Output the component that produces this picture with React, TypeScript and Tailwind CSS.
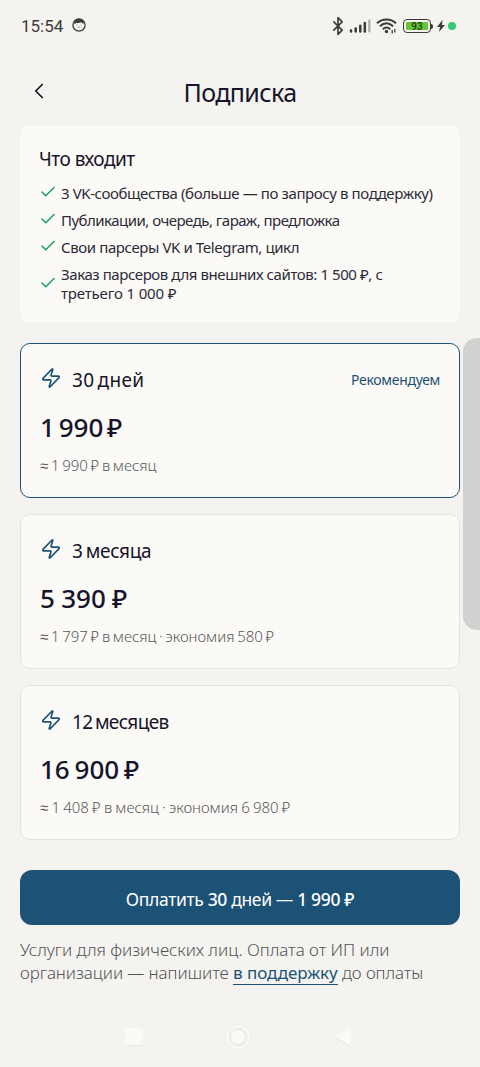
import { Zap, Check, ChevronLeft, Bluetooth } from "lucide-react";

const features = [
    { text: "3 VK-сообщества (больше — по запросу в поддержку)", style: "tracking-[-0.4px]" },
    { text: "Публикации, очередь, гараж, предложка", style: "tracking-[-0.52px]" },
    { text: "Свои парсеры VK и Telegram, цикл", style: "tracking-[-0.4px]" },
    { text: "Заказ парсеров для внешних сайтов: 1 500 ₽, с", more: "третьего 1 000 ₽", style: "tracking-[-0.42px]" },
];

const plans = [
    {
        name: "30 дней",
        nameStyle: "tracking-[0.3px] [word-spacing:-2px]",
        price: "1 990 ₽",
        priceStyle: "[word-spacing:-3px]",
        note: "≈ 1 990 ₽ в месяц",
        noteStyle: "[word-spacing:-1.2px]",
        recommended: true,
    },
    {
        name: "3 месяца",
        nameStyle: "tracking-[-0.3px] [word-spacing:-1.5px]",
        price: "5 390 ₽",
        priceStyle: "[word-spacing:-0.5px]",
        note: "≈ 1 797 ₽ в месяц · экономия 580 ₽",
        noteStyle: "[word-spacing:-1.2px]",
        recommended: false,
    },
    {
        name: "12 месяцев",
        nameStyle: "tracking-[-0.6px] [word-spacing:-2px]",
        price: "16 900 ₽",
        priceStyle: "[word-spacing:-2px]",
        note: "≈ 1 408 ₽ в месяц · экономия 6 980 ₽",
        noteStyle: "[word-spacing:-0.7px]",
        recommended: false,
    },
];

function StatusBar() {
    return (
        <div className="flex h-[52px] items-center pl-[21px] pr-6 text-[#3b3b38]">
            <span className="font-['Roboto'] text-[17px] leading-5">15:54</span>
            <svg className="-mt-[2px] ml-[9px]" width="14" height="14" viewBox="0 0 14 14">
                <circle cx="7" cy="7" r="6.1" fill="none" stroke="currentColor" strokeWidth="1.3" />
                <path d="M2.200 5.800C2.200 2 5 .8 7 .8s4.800 1.200 4.800 5C10.500 5.600 9.800 5 9.500 4.300 7.500 5.200 5.500 5.200 4.300 4.700 4 5.400 3.500 5.800 2.200 5.800Z" fill="currentColor" />
                <path d="M4.800 6.500v.8M9.200 6.500v.8M6 9.300h2" stroke="currentColor" strokeWidth=".5" />
            </svg>
            <div className="ml-auto flex items-center">
                <Bluetooth className="-mt-px h-5 w-5" strokeWidth={2} />
                <svg className="ml-px" width="22" height="14" viewBox="0 0 22 14">
                    <path d="M2 11.500v1M6.700 9.500V12.500M11.300 6.800V12.500M15.800 4V12.500" stroke="currentColor" strokeWidth="2.500" strokeLinecap="round" />
                    <path d="M20.300 1.500V12.500" stroke="#a9aba6" strokeWidth="2.200" strokeLinecap="round" />
                </svg>
                <svg className="ml-[5px]" width="21" height="16" viewBox="0 0 21 16" fill="none" stroke="currentColor" strokeWidth="2">
                    <path d="M1 5.200C6.500.2 14.500.2 20 5.200" />
                    <path d="M3.900 8.300C8 4.600 13 4.600 17.100 8.300" />
                    <path d="M6.800 11.200C9.300 9 11.700 9 14.200 11.200" />
                    <circle cx="10.500" cy="13.500" r="1.700" fill="currentColor" stroke="none" />
                    <path d="M16.200 15.500v-3.500M18.800 11v3.500" strokeWidth="1.300" />
                </svg>
                <div className="ml-[6px] flex h-[14px] w-7 rounded-[4px] border border-[#3b3b38] p-[2px]">
                    <div className="flex w-full items-center justify-center rounded-[1px] bg-[#66c735] pt-px font-['Roboto'] text-[10px] leading-none font-medium text-[#24351d]">93</div>
                </div>
                <div className="h-[5px] w-[2px] rounded-r-sm bg-[#3b3b38]" />
                <svg className="ml-[4px]" width="8" height="12" viewBox="0 0 8 12">
                    <path d="M5.500 0 0 7h3L2 12l6-7H5Z" fill="currentColor" />
                </svg>
                <div className="-mt-px ml-[3px] h-2 w-2 rounded-full bg-[#35cc74]" />
            </div>
        </div>
    );
}

function PlanCard({ plan }: { plan: (typeof plans)[number] }) {
    return (
        <div className={plan.recommended ? "h-[155px] rounded-[10px] border border-[#1b5276] bg-[#fbfaf6] px-[19px] pt-[19px]" : "h-[155px] rounded-[10px] border border-[#e3e3df] bg-[#fbfaf6] px-[19px] pt-[19px]"}>
            <div className="flex h-8 items-center">
                <Zap className="-mt-[3px] h-[22px] w-[22px] text-[#1b5276]" strokeWidth={1.8} />
                <span className="ml-[10px] pt-[3px] text-[19px] text-[#17142b]">
                    <span className={plan.nameStyle}>{plan.name}</span>
                </span>
                {plan.recommended && <span className="ml-auto text-[14px] tracking-[-0.3px] text-[#1b5276]">Рекомендуем</span>}
            </div>
            <div className="mt-[14px] text-[26px] leading-9 font-medium text-[#17142b]">
                <span className={plan.priceStyle}>{plan.price}</span>
            </div>
            <div className="mt-[10px] text-[15px] leading-[21px] font-light text-[#57575c]">
                <span className={plan.noteStyle}>{plan.note}</span>
            </div>
        </div>
    );
}

export default function App() {
    return (
        <div className="relative flex h-[1067px] w-[480px] flex-col overflow-hidden bg-[#f4f3ef] font-['Noto_Sans',sans-serif]">
            <StatusBar />
            <div className="grid h-[73px] grid-cols-[40px_1fr_40px] items-center px-5">
                <ChevronLeft className="mt-1 ml-[6px] h-[26px] w-[26px] text-[#17142b]" strokeWidth={1.6} />
                <h1 className="pt-2 text-center text-[25px] tracking-[-0.6px] text-[#17142b]">Подписка</h1>
            </div>
            <div className="mx-5 h-[198px] rounded-[10px] bg-[#fbfaf6] p-5 pl-[19px]">
                <h2 className="text-[19px] leading-7 tracking-[-0.5px] text-[#17142b]">Что входит</h2>
                <div className="mt-[11px] flex flex-col gap-2">
                    {features.map((f) => (
                        <div key={f.text} className="flex items-center">
                            <Check className="-mt-[3px] h-[18px] w-[18px] shrink-0 text-[#16a35a]" strokeWidth={2} />
                            <div className="ml-1 text-[15px] leading-[19px] whitespace-nowrap text-[#2c2b38]">
                                <div className={f.style}>{f.text}</div>
                                {f.more && <div className="tracking-[-0.15px]">{f.more}</div>}
                            </div>
                        </div>
                    ))}
                </div>
            </div>
            <div className="mx-5 mt-5 flex flex-col gap-4">
                {plans.map((plan) => (
                    <PlanCard key={plan.name} plan={plan} />
                ))}
            </div>
            <button className="mx-5 mt-[30px] h-[55px] shrink-0 rounded-xl bg-[#1b5276] pt-[3px] text-[17.5px] tracking-[-0.35px] text-white">
                Оплатить <span className="font-medium">30</span> дней — <span className="font-medium">1 990 ₽</span>
            </button>
            <div className="mt-[13px] ml-5 text-[17px] leading-[23px] font-light whitespace-nowrap text-[#535358]">
                <div className="tracking-[-0.04px]">Услуги для физических лиц. Оплата от ИП или</div>
                <div className="tracking-[-0.08px]">
                    организации — напишите <a className="border-b border-[#1b5276] font-normal tracking-[-0.05px] text-[#1b5276]">в поддержку</a> до оплаты
                </div>
            </div>
            <div className="mt-auto flex h-[60px] items-center pl-[125px]">
                <div className="h-[18px] w-[18px] rounded-sm border-b border-[#e7e6e2] bg-[#fafaf7]" />
                <svg className="ml-[82px]" width="26" height="26" viewBox="0 0 26 26">
                    <circle cx="13" cy="13" r="11" fill="none" stroke="#e5e4e0" strokeWidth="3" />
                    <circle cx="13" cy="13" r="11" fill="none" stroke="#fbfbf8" strokeWidth="2" />
                    <circle cx="13" cy="13" r="7.500" fill="#fafaf7" stroke="#e5e4e0" />
                </svg>
                <svg className="ml-[83px]" width="18" height="22" viewBox="0 0 18 22">
                    <path d="M17 1v20L1 11Z" fill="#fafaf7" />
                    <path d="M1 11l16 10" stroke="#e3e2de" />
                </svg>
            </div>
            <div className="absolute top-[338px] -right-4 h-[292px] w-[33px] rounded-[14px] bg-[#d2d1cf]" />
        </div>
    );
}
